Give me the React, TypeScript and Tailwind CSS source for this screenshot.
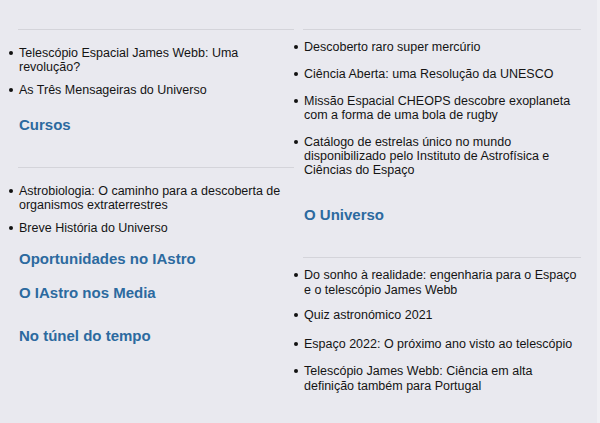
import React from "react";

function Item({ children, className = "" }: { children: React.ReactNode; className?: string }) {
  return (
    <li className={"flex -ml-[11px] " + className}>
      <span className="w-[11px] shrink-0 flex items-start pt-[5px] pl-[1px]">
        <span className="block w-[4px] h-[4px] rounded-full bg-[#111111]" />
      </span>
      <span>{children}</span>
    </li>
  );
}

function Heading({ children, className }: { children: React.ReactNode; className: string }) {
  return (
    <h3 className={"text-[15px] leading-[18px] font-bold text-[#2c6a9f] " + className}>{children}</h3>
  );
}

export default function App() {
  return (
    <div
      className="w-[600px] h-[423px] bg-[#e9e9ef] flex text-[12.5px] leading-[14px] text-[#141414] overflow-hidden"
      style={{ fontFamily: '"Liberation Sans", Arial, sans-serif' }}
    >
      {/* left column */}
      <div className="w-[295px] pl-[19px] pt-[29px] flex flex-col">
        <div className="w-[276px] -ml-[1px] border-t border-[#d4d4da]" />
        <ul className="mt-[16px] flex flex-col gap-[9px] w-[276px]">
          <Item>Telescópio Espacial James Webb: Uma revolução?</Item>
          <Item>As Três Mensageiras do Universo</Item>
        </ul>
        <Heading className="mt-[19px]">Cursos</Heading>
        <div className="mt-[33px] w-[276px] -ml-[1px] border-t border-[#d4d4da]" />
        <ul className="mt-[16px] flex flex-col gap-[9px] w-[276px]">
          <Item>Astrobiologia: O caminho para a descoberta de organismos extraterrestres</Item>
          <Item>Breve História do Universo</Item>
        </ul>
        <Heading className="mt-[15px]">Oportunidades no IAstro</Heading>
        <Heading className="mt-[16px]">O IAstro nos Media</Heading>
        <Heading className="mt-[25px]">No túnel do tempo</Heading>
      </div>

      {/* right column */}
      <div className="w-[302px] pl-[9px] pt-[29px] flex flex-col">
        <div className="w-[278px] -ml-[1px] border-t border-[#d4d4da]" />
        <ul className="mt-[10px] flex flex-col gap-[13px] w-[280px]">
          <Item>Descoberto raro super mercúrio</Item>
          <Item>Ciência Aberta: uma Resolução da UNESCO</Item>
          <Item>Missão Espacial CHEOPS descobre exoplaneta com a forma de uma bola de rugby</Item>
          <Item>
            Catálogo de estrelas único no mundo disponibilizado pelo Instituto de Astrofísica e
            Ciências do Espaço
          </Item>
        </ul>
        <Heading className="mt-[29px]">O Universo</Heading>
        <div className="mt-[33px] w-[278px] -ml-[1px] border-t border-[#d4d4da]" />
        <ul className="mt-[10px] flex flex-col w-[280px] leading-[15px]">
          <Item>Do sonho à realidade: engenharia para o Espaço e o telescópio James Webb</Item>
          <Item className="mt-[10px]">Quiz astronómico 2021</Item>
          <Item className="mt-[14px]">Espaço 2022: O próximo ano visto ao telescópio</Item>
          <Item className="mt-[12px]">Telescópio James Webb: Ciência em alta definição também para Portugal</Item>
        </ul>
      </div>

      {/* right edge strip */}
      <div className="w-[3px] h-full bg-[#f0f0f4]" />
    </div>
  );
}
